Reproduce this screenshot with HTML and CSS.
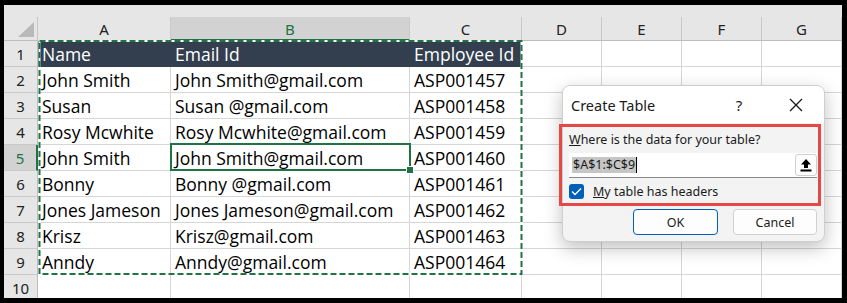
FILE: index.html
```html
<!DOCTYPE html>
<html>
<head>
<meta charset="utf-8">
<link rel="stylesheet" href="styles.css">
</head>
<body>
<div class="window">
  <div class="topband"></div>
  <div class="sheet">
    <div class="corner"><svg width="16" height="15" viewBox="0 0 16 15"><polygon points="16,0 16,15 0,15" fill="#b9b9b9"/></svg></div>
    <div class="ch">A</div>
    <div class="ch sel">B</div>
    <div class="ch">C</div>
    <div class="ch">D</div>
    <div class="ch">E</div>
    <div class="ch">F</div>
    <div class="ch">G</div>

    <div class="rh">1</div>
    <div class="c dark">Name</div><div class="c dark">Email Id</div><div class="c dark">Employee Id</div><div class="c"></div><div class="c"></div><div class="c"></div><div class="c"></div>

    <div class="rh">2</div>
    <div class="c">John Smith</div><div class="c">John Smith@gmail.com</div><div class="c">ASP001457</div><div class="c"></div><div class="c"></div><div class="c"></div><div class="c"></div>

    <div class="rh">3</div>
    <div class="c">Susan</div><div class="c">Susan @gmail.com</div><div class="c">ASP001458</div><div class="c"></div><div class="c"></div><div class="c"></div><div class="c"></div>

    <div class="rh">4</div>
    <div class="c">Rosy Mcwhite</div><div class="c">Rosy Mcwhite@gmail.com</div><div class="c">ASP001459</div><div class="c"></div><div class="c"></div><div class="c"></div><div class="c"></div>

    <div class="rh sel">5</div>
    <div class="c">John Smith</div><div class="c">John Smith@gmail.com</div><div class="c">ASP001460</div><div class="c"></div><div class="c"></div><div class="c"></div><div class="c"></div>

    <div class="rh">6</div>
    <div class="c">Bonny</div><div class="c">Bonny @gmail.com</div><div class="c">ASP001461</div><div class="c"></div><div class="c"></div><div class="c"></div><div class="c"></div>

    <div class="rh">7</div>
    <div class="c">Jones Jameson</div><div class="c">Jones Jameson@gmail.com</div><div class="c">ASP001462</div><div class="c"></div><div class="c"></div><div class="c"></div><div class="c"></div>

    <div class="rh">8</div>
    <div class="c">Krisz</div><div class="c">Krisz@gmail.com</div><div class="c">ASP001463</div><div class="c"></div><div class="c"></div><div class="c"></div><div class="c"></div>

    <div class="rh">9</div>
    <div class="c">Anndy</div><div class="c">Anndy@gmail.com</div><div class="c">ASP001464</div><div class="c"></div><div class="c"></div><div class="c"></div><div class="c"></div>

    <div class="rh">10</div>
    <div class="c"></div><div class="c"></div><div class="c"></div><div class="c"></div><div class="c"></div><div class="c"></div><div class="c"></div>
  </div>

  <svg class="ants" width="490" height="240" viewBox="0 0 490 240">
    <rect x="1.5" y="2" width="482" height="233" fill="none" stroke="#ffffff" stroke-width="2"/>
    <rect x="1.5" y="2" width="482" height="233" fill="none" stroke="#217346" stroke-width="2" stroke-dasharray="6 3"/>
  </svg>
  <div class="active"><span class="handle"></span></div>

  <div class="dialog">
    <div class="titlebar">
      <span class="title">Create Table</span>
      <span class="help">?</span>
      <svg class="close" width="14" height="14" viewBox="0 0 14 14"><path d="M1 1 L13 13 M13 1 L1 13" stroke="#1a1a1a" stroke-width="1.3" fill="none"/></svg>
    </div>
    <div class="dbody">
      <div class="label"><u>W</u>here is the data for your table?</div>
      <div class="input">
        <span class="seltext">$A$1:$C$9</span><span class="caret"></span>
        <span class="upbtn"><svg width="12" height="14" viewBox="0 0 12 14"><path d="M6 1 L11 6.5 H8 V10 H4 V6.5 H1 Z" fill="#000"/><rect x="0.5" y="11.5" width="11" height="2" fill="#000"/></svg></span>
      </div>
      <div class="checkrow">
        <span class="check"><svg width="11" height="9" viewBox="0 0 11 9"><path d="M1 4.5 L4 7.5 L10 1.5" stroke="#fff" stroke-width="1.4" fill="none"/></svg></span>
        <span class="checklabel"><u>M</u>y table has headers</span>
      </div>
      <div class="buttons">
        <span class="btn ok">OK</span>
        <span class="btn">Cancel</span>
      </div>
    </div>
  </div>
  <div class="redbox"></div>
</div>
</body>
</html>
```

FILE: styles.css
```css
html, body {
  margin: 0;
  padding: 0;
  background: #000;
}
body {
  width: 847px;
  height: 303px;
  overflow: hidden;
}
.window {
  position: relative;
  margin: 5px 5px 0 4px;
  width: 838px;
  height: 293px;
  overflow: hidden;
  background: #fff;
}
.topband {
  height: 12px;
  background: #e6e6e6;
}
.sheet {
  display: grid;
  grid-template-columns: 34px 133px 239px 112px 80px 80px 80px 80px;
  grid-template-rows: 24px repeat(10, 26px);
}
.corner {
  background: #e6e6e6;
  border-right: 1px solid #c6c6c6;
  border-bottom: 1px solid #bdbdbd;
  box-sizing: border-box;
  display: flex;
  align-items: flex-end;
  justify-content: flex-end;
  padding: 0 3px 3px 0;
}
.corner svg { display: block; }
.ch {
  background: #e6e6e6;
  border-right: 1px solid #c9c9c9;
  border-bottom: 1px solid #bdbdbd;
  box-sizing: border-box;
  font-family: "Noto Sans", sans-serif;
  font-size: 15px;
  color: #222;
  display: flex;
  align-items: center;
  justify-content: center;
  padding-top: 1px;
}
.ch.sel {
  background: #d2d2d2;
  color: #217346;
  border-bottom: 2px solid #217346;
}
.rh {
  background: #e6e6e6;
  border-right: 1px solid #bdbdbd;
  border-bottom: 1px solid #c9c9c9;
  box-sizing: border-box;
  font-family: "Noto Sans", sans-serif;
  font-size: 15px;
  color: #222;
  display: flex;
  align-items: center;
  justify-content: center;
}
.rh.sel {
  background: #d2d2d2;
  color: #217346;
  border-right: 2px solid #217346;
}
.c {
  border-right: 1px solid #d6d6d6;
  border-bottom: 1px solid #d6d6d6;
  box-sizing: border-box;
  font-family: "Open Sans", "Noto Sans", sans-serif;
  font-size: 17.5px;
  line-height: 20px;
  color: #000;
  display: flex;
  align-items: flex-end;
  padding: 0 0 2px 4px;
  white-space: nowrap;
  overflow: hidden;
}
.c.dark {
  background: #333f4f;
  color: #fff;
  border-right-color: #333f4f;
  border-bottom-color: #333f4f;
}
.ants {
  position: absolute;
  left: 34px;
  top: 34px;
}
.active {
  position: absolute;
  left: 166px;
  top: 138px;
  width: 241px;
  height: 28px;
  border: 2px solid #217346;
  box-sizing: border-box;
}
.handle {
  position: absolute;
  right: -5px;
  bottom: -5px;
  width: 6px;
  height: 6px;
  background: #217346;
  border: 1px solid #fff;
}
.dialog {
  position: absolute;
  left: 558px;
  top: 80px;
  width: 263px;
  height: 157px;
  box-sizing: border-box;
  border: 1px solid #cfcfcf;
  border-radius: 8px;
  background: #f3f3f3;
  box-shadow: 0 6px 18px rgba(0, 0, 0, 0.25);
  overflow: hidden;
  font-family: "Noto Sans", sans-serif;
  color: #1a1a1a;
}
.titlebar {
  height: 37px;
  background: #fff;
  display: flex;
  align-items: center;
  padding-left: 8px;
  position: relative;
}
.title {
  font-size: 14.5px;
  flex: 1;
}
.help {
  font-size: 15px;
  width: 20px;
  text-align: center;
  margin-right: 40px;
}
.close {
  margin-right: 21px;
}
.dbody {
  padding: 0 7px 0 6px;
  display: flex;
  flex-direction: column;
}
.label {
  font-size: 12.5px;
  height: 16px;
  line-height: 16px;
  margin-top: 9px;
}
.input {
  margin-top: 5px;
  height: 25px;
  background: #fff;
  border-bottom: 1px solid #8a8a8a;
  box-sizing: border-box;
  display: flex;
  align-items: center;
  padding-left: 3px;
  position: relative;
}
.seltext {
  background: #c6c6c6;
  font-size: 12.5px;
  line-height: 16px;
  padding: 0 1px;
}
.caret {
  width: 1px;
  height: 16px;
  background: #000;
}
.upbtn {
  position: absolute;
  right: 0;
  top: 1px;
  width: 22px;
  height: 22px;
  box-sizing: border-box;
  border: 1px solid #d0d0d0;
  border-radius: 3px;
  background: #fdfdfd;
  display: flex;
  align-items: center;
  justify-content: center;
}
.upbtn svg { display: block; }
.checkrow {
  margin-top: 5px;
  height: 16px;
  display: flex;
  align-items: center;
}
.check {
  width: 15px;
  height: 15px;
  border-radius: 3px;
  background: #005fb8;
  display: flex;
  align-items: center;
  justify-content: center;
  margin-right: 9px;
}
.checklabel {
  font-size: 12.5px;
}
.buttons {
  margin-top: 10px;
  display: flex;
  justify-content: flex-end;
  gap: 15px;
}
.btn {
  width: 84px;
  height: 26px;
  box-sizing: border-box;
  border: 1px solid #d0d0d0;
  border-radius: 4px;
  background: #fdfdfd;
  display: flex;
  align-items: center;
  justify-content: center;
  font-size: 12.5px;
}
.btn.ok {
  width: 85px;
  border-color: #005fb8;
}
.redbox {
  position: absolute;
  left: 555px;
  top: 119px;
  width: 262px;
  height: 82px;
  box-sizing: border-box;
  border: 3px solid #e64848;
}
```
